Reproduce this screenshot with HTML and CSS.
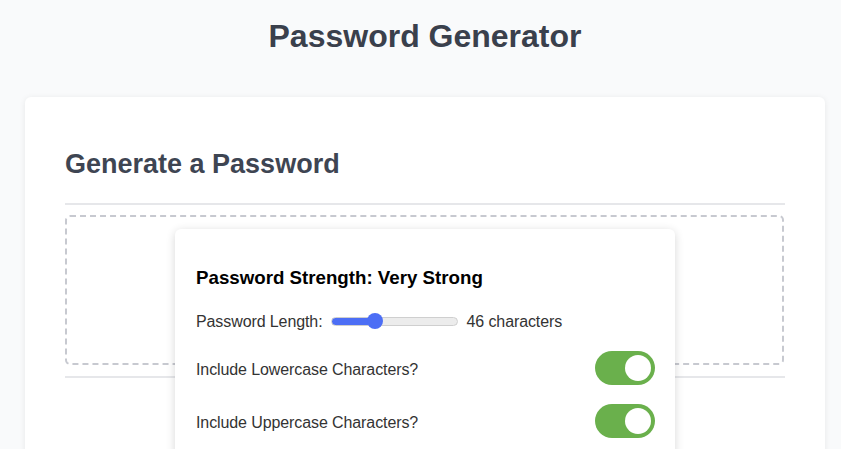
FILE: index.html
```html
<!DOCTYPE html>
<html lang="en">
<head>
<meta charset="utf-8">
<title>Password Generator</title>
<link rel="stylesheet" href="styles.css">
</head>
<body>
<div class="page">
  <h1 class="title">Password Generator</h1>
  <main class="card">
    <h2 class="card-title">Generate a Password</h2>
    <hr class="divider">
    <div class="output-box"></div>
    <hr class="divider divider-bottom">
  </main>
  <section class="options">
    <h3 class="strength">Password Strength: Very Strong</h3>
    <div class="row row-length">
      <label class="label" for="len">Password Length:</label>
      <input id="len" class="range" type="range" min="8" max="128" value="46" style="--fill: 29%">
      <span class="label">46 characters</span>
    </div>
    <div class="row row-toggle">
      <span class="label">Include Lowercase Characters?</span>
      <span class="toggle on"><span class="knob"></span></span>
    </div>
    <div class="row row-toggle">
      <span class="label">Include Uppercase Characters?</span>
      <span class="toggle on"><span class="knob"></span></span>
    </div>
  </section>
</div>
</body>
</html>
```
FILE: styles.css
```css
* { box-sizing: border-box; }
html, body { margin: 0; padding: 0; }
body {
  background: #f9fafb;
  font-family: "Liberation Sans", Arial, sans-serif;
  width: 841px;
  height: 449px;
  overflow: hidden;
}
.page {
  position: relative;
  padding-top: 18px;
}
.title {
  margin: 0;
  padding-left: 9px;
  text-align: center;
  font-size: 32px;
  line-height: 37px;
  font-weight: 700;
  color: #3a404c;
}
.card {
  margin: 42px 16px 0 25px;
  width: 800px;
  background: #fff;
  border-radius: 6px;
  box-shadow: 0 1px 6px rgba(0,0,0,0.08);
  padding: 40px 40px 120px 40px;
}
.card-title {
  margin: 12px 0 0 0;
  font-size: 27px;
  line-height: 31px;
  font-weight: 700;
  color: #3e4552;
}
.divider {
  border: 0;
  height: 2px;
  background: #e6e7ea;
  margin: 23px 0 0 0;
}
.output-box {
  margin-top: 10px;
  height: 150px;
  border: 2px dashed #c7c9d0;
  border-radius: 5px;
  width: 719px;
}
.divider-bottom { margin-top: 11px; }
.options {
  position: absolute;
  top: 229px;
  left: 175px;
  width: 500px;
  background: #fff;
  border-radius: 6px;
  box-shadow: 0 2px 10px rgba(0,0,0,0.16);
  padding: 20px 20px 30px 20px;
}
.strength {
  margin: 18px 0 20px 1px;
  font-size: 18.72px;
  line-height: 21px;
  font-weight: 700;
  color: #000;
}
.row {
  display: flex;
  align-items: center;
  margin-left: 1px;
}
.row-length {
  height: 28px;
  margin-top: 0;
}
.row-toggle {
  justify-content: space-between;
  height: 34px;
  margin-top: 19px;
}
.row-toggle .label { padding-top: 3px; }
.row-length + .row-toggle { margin-top: 15px; }
.label {
  font-size: 16px;
  color: #333;
  letter-spacing: -0.1px;
}
.range {
  -webkit-appearance: none;
  appearance: none;
  width: 127px;
  height: 9px;
  margin: 0 8px 0 9px;
  border-radius: 5px;
  border: 1px solid #cfcfcf;
  background: linear-gradient(to right, #4c6ef5 0, #4c6ef5 var(--fill), #ececec var(--fill), #ececec 100%);
  outline: none;
  position: relative;
  top: -1px;
}
.range::-webkit-slider-thumb {
  -webkit-appearance: none;
  appearance: none;
  width: 16px;
  height: 16px;
  border-radius: 50%;
  background: #4c6ef5;
  border: none;
}
.toggle {
  position: relative;
  width: 60px;
  height: 34px;
  border-radius: 17px;
  background: #6ab04c;
  display: inline-block;
  flex: none;
}
.knob {
  position: absolute;
  top: 4px;
  right: 4px;
  width: 26px;
  height: 26px;
  border-radius: 50%;
  background: #fff;
}
```
